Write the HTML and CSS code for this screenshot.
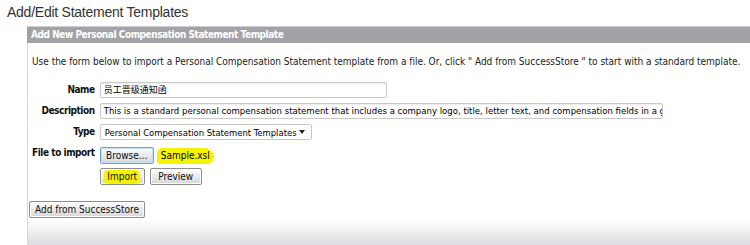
FILE: index.html
```html
<!DOCTYPE html>
<html>
<head>
<meta charset="utf-8">
<link rel="stylesheet" href="styles.css">
</head>
<body>
<h1 class="page-title">Add/Edit Statement Templates</h1>
<div class="panel">
  <div class="panel-head">Add New Personal Compensation Statement Template</div>
  <div class="panel-body">
    <p class="intro">Use the form below to import a Personal Compensation Statement template from a file. Or, click " Add from SuccessStore " to start with a standard template.</p>
    <div class="form">
      <label class="lbl">Name</label>
      <div class="field"><div class="input input-name">员工晋级通知函</div></div>
      <label class="lbl">Description</label>
      <div class="field"><div class="input input-desc">This is a standard personal compensation statement that includes a company logo, title, letter text, and compensation fields in a grid</div></div>
      <label class="lbl">Type</label>
      <div class="field"><div class="select"><span class="select-text">Personal Compensation Statement Templates</span><span class="arrow"></span></div></div>
      <label class="lbl lbl-file">File to import</label>
      <div class="field file-row"><span class="btn btn-browse">Browse...</span><span class="hl file-name">Sample.xsl</span></div>
      <span></span>
      <div class="field actions"><span class="btn btn-import"><span class="hl-in">Import</span></span><span class="btn btn-preview">Preview</span></div>
    </div>
    <div class="store"><span class="btn btn-store">Add from SuccessStore</span></div>
  </div>
  <div class="panel-foot"></div>
</div>
</body>
</html>
```
FILE: styles.css
```css
html, body { margin: 0; padding: 0; background: #fff; }
body { font-family: "DejaVu Sans Condensed", "DejaVu Sans", sans-serif; font-size: 10px; color: #000; overflow: hidden; }
.page-title { font-family: "Liberation Sans", Arial, sans-serif; font-weight: normal; font-size: 14px; letter-spacing: -0.25px; line-height: 18px; color: #333; margin: 3px 0 5px 7px; }
.panel { margin-left: 27px; border-left: 1px solid #d4d4d4; }
.panel-head { background: #a3a3a7; border-top: 1px solid #cfcfd2; height: 16px; line-height: 16px; color: #fff; font-weight: bold; letter-spacing: -0.45px; padding-left: 4px; margin-left: -1px; white-space: nowrap; }
.panel-body { padding: 12px 0 0 4px; }
.intro { margin: 0 0 13px 0; line-height: 14px; white-space: nowrap; color: #222; letter-spacing: -0.01px; }
.form { display: grid; grid-template-columns: auto 1fr; column-gap: 5px; row-gap: 5px; align-items: start; }
.lbl { font-weight: bold; text-align: right; line-height: 16px; letter-spacing: -0.45px; color: #111; }
.input { border: 1px solid #c9c9c9; box-shadow: inset 0 1px 1px #eee; height: 16px; line-height: 14px; padding: 0 3px; white-space: nowrap; overflow: hidden; background: #fff; box-sizing: border-box; border-radius: 2px; font-size: 9px; }
.input-name { width: 287px; font-family: "Noto Sans CJK SC", sans-serif; }
.input-desc { width: 563px; font-size: 9.5px; }
.select { display: flex; align-items: center; justify-content: space-between; width: 212px; box-sizing: border-box; border: 1px solid #c9c9c9; border-radius: 2px; height: 16px; padding: 0 6px 0 4px; background: #fff; white-space: nowrap; font-size: 9.4px; }
.arrow { width: 0; height: 0; border-left: 3px solid transparent; border-right: 3px solid transparent; border-top: 4px solid #222; }
.file-row { display: flex; align-items: center; gap: 3px; margin-top: 2px; }
.btn { display: inline-flex; align-items: center; justify-content: center; box-sizing: border-box; border: 1px solid #8e8e8e; border-radius: 2px; background: linear-gradient(#fdfdfd, #e8e8e8 55%, #d6d6d6); box-shadow: inset 0 0 0 1px #fff; height: 17px; white-space: nowrap; color: #111; }
.btn-browse { width: 54px; border-color: #6aa7df; box-shadow: inset 0 0 0 1px #c4def5; }
.btn-import { width: 45px; }
.btn-preview { width: 52px; }
.btn-store { width: 116px; }
.hl { background: #f6f300; border-radius: 5px 9px 7px 3px; padding: 0 4px; height: 16px; line-height: 16px; }
.hl-in { background: #f6f300; border-radius: 4px; padding: 1px 3px; line-height: 12px; }
.actions { display: flex; gap: 5px; margin-top: -1px; }
.store { padding: 16px 0 0 0; margin-left: -3px; height: 18px; }
.panel-foot { height: 40px; margin-top: 1px; background: linear-gradient(#ffffff, #d3d3d8 80%); }
```
